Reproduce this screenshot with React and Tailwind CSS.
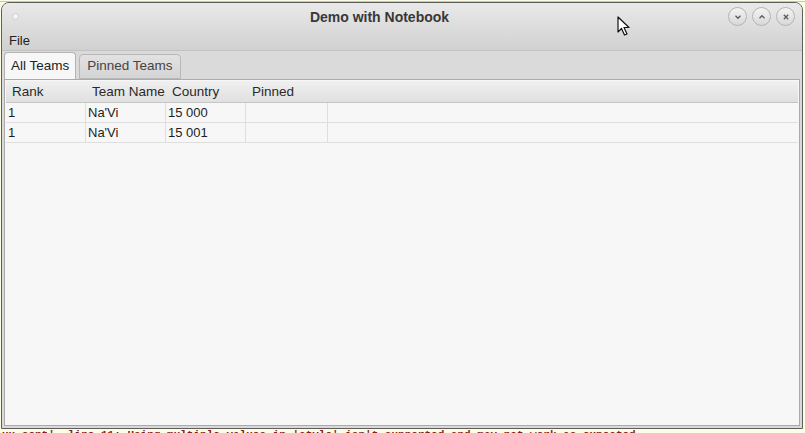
import React from 'react';

const cols = [
  { label: 'Rank', w: 'w-[80px]' },
  { label: 'Team Name', w: 'w-[80px]' },
  { label: 'Country', w: 'w-[80px]' },
  { label: 'Pinned', w: 'w-[82px]' },
];

const rows = [
  ['1', "Na'Vi", '15 000', ''],
  ['1', "Na'Vi", '15 001', ''],
];

function CircleButton({ children }) {
  return (
    <div className="w-[19px] h-[19px] rounded-full border border-[#b4b4b4] bg-gradient-to-b from-[#f4f4f4] to-[#d8d8d8] flex items-center justify-center text-[#5a5a5a]">
      {children}
    </div>
  );
}

export default function App() {
  return (
    <div
      className="relative w-[805px] h-[433px] overflow-hidden bg-[#fdfde6]"
      style={{ fontFamily: '"Liberation Sans", Arial, sans-serif' }}
    >
      <div className="h-[2px] border-b border-[#c9c9a0]" />

      {/* window */}
      <div className="ml-[1px] w-[802px] h-[427px] rounded-t-[8px] border border-[#5e5e5e] bg-[#d9d9d9] flex flex-col overflow-hidden">
        {/* title + menu */}
        <div className="h-[48px] bg-gradient-to-b from-[#e9e9e9] to-[#d1d1d1] border-b border-[#c2c2c2] flex flex-col">
          <div className="h-[27px] flex items-center px-[10px]">
            <div className="w-[7px] h-[7px] rounded-full bg-[#f3f3f3] border border-[#d0d0d0]" />
            <div className="flex-1 text-center text-[14px] font-bold text-[#383838] pl-[12px] pt-[1px]">
              Demo with Notebook
            </div>
            <div className="flex gap-[5px] mr-[-3px]">
              <CircleButton>
                <svg width="8" height="8" viewBox="0 0 8 8" fill="none" stroke="currentColor" strokeWidth="1.3">
                  <path d="M1.5 2.8 4 5.3 6.5 2.8" />
                </svg>
              </CircleButton>
              <CircleButton>
                <svg width="8" height="8" viewBox="0 0 8 8" fill="none" stroke="currentColor" strokeWidth="1.3">
                  <path d="M1.5 5.2 4 2.7 6.5 5.2" />
                </svg>
              </CircleButton>
              <CircleButton>
                <svg width="8" height="8" viewBox="0 0 8 8" fill="none" stroke="currentColor" strokeWidth="1.3">
                  <path d="M1.8 1.8 6.2 6.2M6.2 1.8 1.8 6.2" />
                </svg>
              </CircleButton>
            </div>
          </div>
          <div className="h-[20px] flex items-center px-[7px] pt-[2px] text-[13px] text-[#222]">File</div>
        </div>

        {/* tabs */}
        <div className="h-[28px] flex items-end px-[2px] gap-[3px] bg-[#dadada]">
          <div className="h-[27px] px-[6px] flex items-center rounded-t-[4px] border border-b-0 border-[#b3b3b3] bg-[#f7f7f7] text-[13.5px] text-[#222]">
            All Teams
          </div>
          <div className="h-[25px] px-[7px] flex items-center rounded-t-[4px] border border-[#b8b8b8] bg-gradient-to-b from-[#e2e2e2] to-[#d4d4d4] text-[13.5px] text-[#444]">
            Pinned Teams
          </div>
        </div>

        {/* content */}
        <div className="flex-1 mx-[2px] mb-[2px] border border-[#aaaaaa] bg-[#f7f7f7] p-[1px] flex flex-col">
          <div className="flex h-[22px] bg-gradient-to-b from-[#f0f0f0] to-[#e0e0e0] border-b border-[#c6c6c6]">
            {cols.map((c) => (
              <div key={c.label} className={`${c.w} flex items-center pl-[6px] pt-[1px] text-[13.5px] text-[#2a2a2a]`}>
                {c.label}
              </div>
            ))}
          </div>
          {rows.map((r, i) => (
            <div key={i} className="flex h-[20px] border-b border-[#dedede] bg-[#f7f7f7]">
              {r.map((v, j) => (
                <div
                  key={j}
                  className={`${cols[j].w} flex items-center pl-[2px] text-[13px] text-[#1e1e1e] border-r border-[#dedede]`}
                >
                  {v}
                </div>
              ))}
              <div className="flex-1" />
            </div>
          ))}
          <div className="flex-1" />
        </div>
      </div>

      <div className="whitespace-nowrap text-[11px] leading-[12px] text-[#8b1c1c] pl-[2px] font-bold" style={{ fontFamily: '"Liberation Mono", monospace' }}>
        ux.cont', line 11: Using multiple values in 'style' isn't supported and may not work as expected
      </div>

      {/* mouse cursor */}
      <svg className="absolute left-[617px] top-[16px]" width="14" height="21" viewBox="0 0 14 21">
        <path d="M1 1 L1 16 L4.5 12.5 L7.5 19 L10 18 L7 11.5 L12 11.5 Z" fill="#fff" stroke="#111" strokeWidth="1.2" strokeLinejoin="round" />
      </svg>
    </div>
  );
}
